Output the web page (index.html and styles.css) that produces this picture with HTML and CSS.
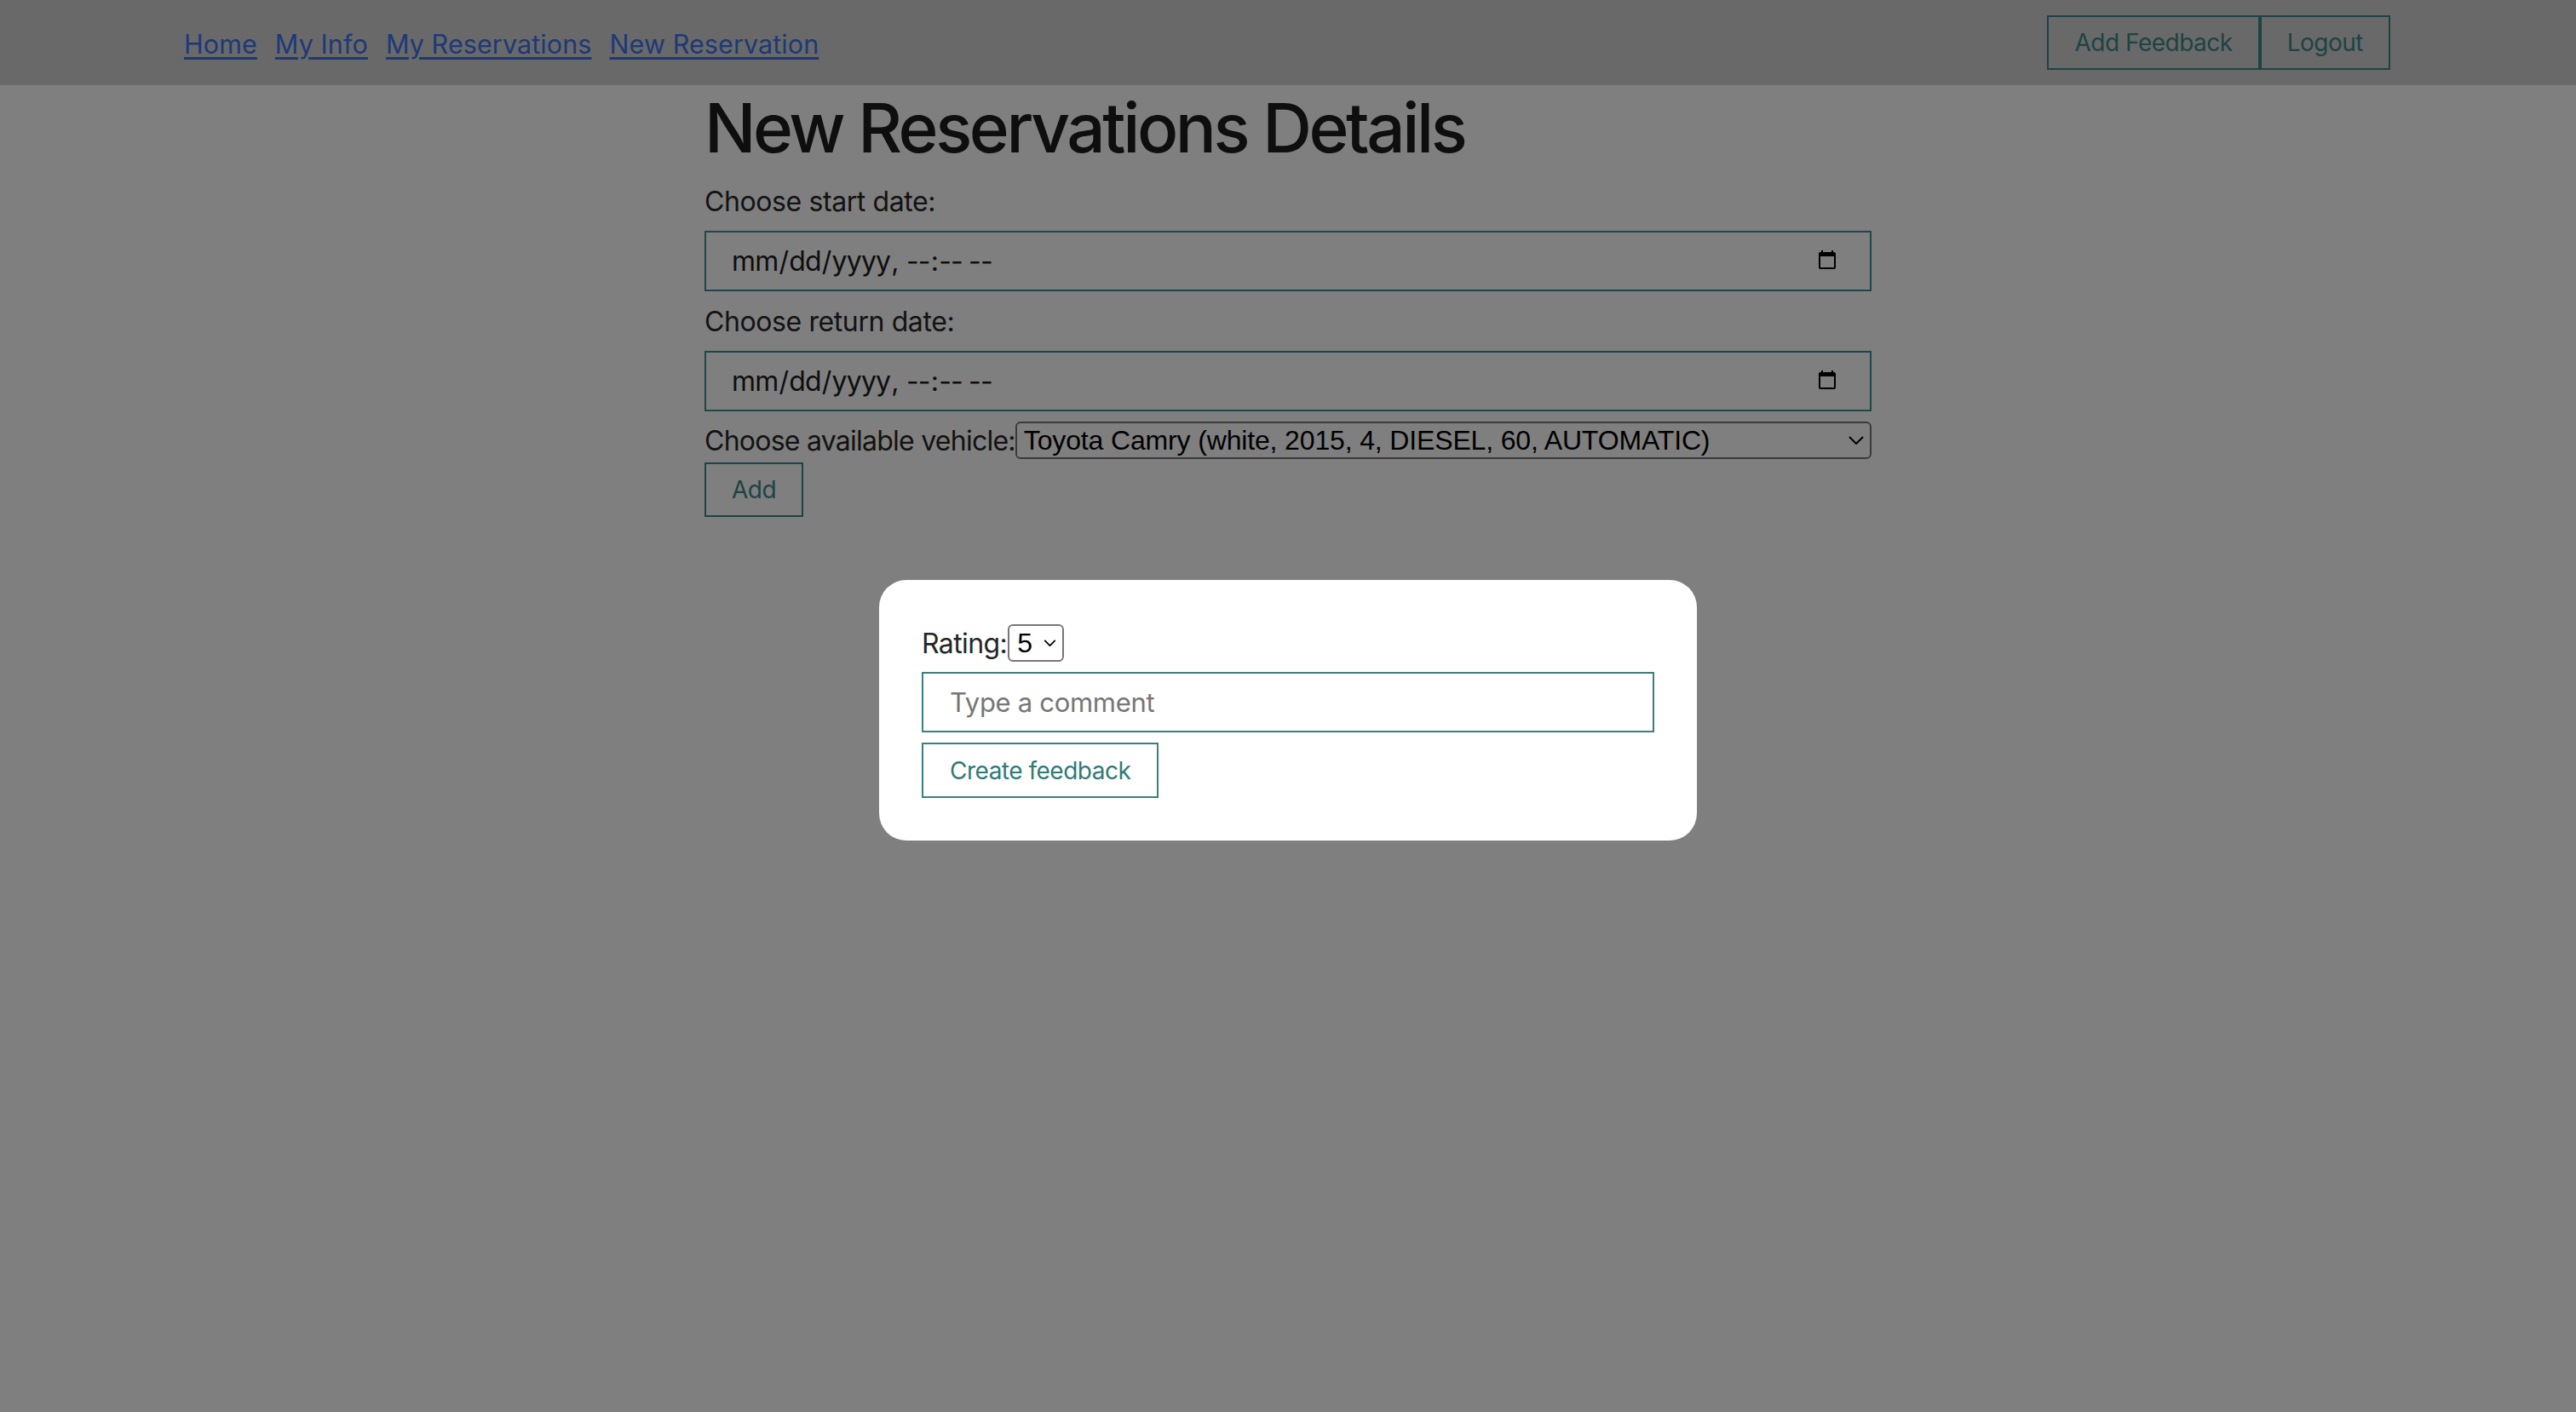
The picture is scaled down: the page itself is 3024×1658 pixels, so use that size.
FILE: index.html
```html
<!DOCTYPE html>
<html lang="en">
<head>
<meta charset="utf-8">
<title>New Reservation</title>
<link rel="stylesheet" href="styles.css">
</head>
<body>
<header class="topbar">
  <nav class="nav">
    <a class="nav-link" href="#">Home</a>
    <a class="nav-link" href="#">My Info</a>
    <a class="nav-link" href="#">My Reservations</a>
    <a class="nav-link" href="#">New Reservation</a>
  </nav>
  <div class="actions">
    <button class="btn">Add Feedback</button>
    <button class="btn">Logout</button>
  </div>
</header>

<main class="main">
  <h1 class="title">New Reservations Details</h1>
  <form class="res-form">
    <label class="label" for="start">Choose start date:</label>
    <input class="date-input" id="start" type="datetime-local">
    <label class="label label-second" for="return">Choose return date:</label>
    <input class="date-input" id="return" type="datetime-local">
    <div class="vehicle-row">
      <label class="label label-vehicle" for="vehicle">Choose available vehicle:</label>
      <div class="select-wrap select-wide">
        <select class="select" id="vehicle">
          <option>Toyota Camry (white, 2015, 4, DIESEL, 60, AUTOMATIC)</option>
        </select>
        <svg class="chevron" viewBox="0 0 18 10" width="18" height="10"><path d="M1 1l8 8 8-8" fill="none" stroke="#000" stroke-width="2"/></svg>
      </div>
    </div>
    <button class="btn btn-add" type="button">Add</button>
  </form>
</main>

<div class="overlay">
  <div class="modal">
    <div class="rating-row">
      <label class="label rating-label" for="rating">Rating:</label>
      <div class="select-wrap select-small">
        <select class="select" id="rating">
          <option>5</option>
        </select>
        <svg class="chevron chevron-small" viewBox="0 0 16 9" width="15" height="8"><path d="M1 1l7 7 7-7" fill="none" stroke="#000" stroke-width="2"/></svg>
      </div>
    </div>
    <input class="comment-input" type="text" placeholder="Type a comment">
    <button class="btn btn-create" type="button">Create feedback</button>
  </div>
</div>
</body>
</html>
```

FILE: styles.css
```css
* { box-sizing: border-box; }

html, body {
  margin: 0;
  height: 100%;
}

body {
  background: #ffffff;
  font-family: Inter, "Noto Sans", sans-serif;
  color: #222222;
}

.topbar {
  height: 100px;
  background: #d3d3d3;
  display: flex;
  align-items: center;
  justify-content: space-between;
  padding: 0 218px 0 216px;
}

.nav {
  display: flex;
  gap: 21px;
  margin-top: 2px;
}

.nav-link {
  color: #3b72f0;
  font-size: 30.5px;
  letter-spacing: 0.1px;
  text-decoration: underline;
  text-decoration-thickness: 3px;
  text-underline-offset: 4px;
}

.actions {
  display: flex;
}

.btn {
  height: 64px;
  padding: 0 30px;
  border: 2px solid #3a8886;
  background: transparent;
  color: #3a8886;
  font-family: Inter, "Noto Sans", sans-serif;
  font-size: 28px;
  letter-spacing: -0.5px;
  cursor: pointer;
}

.main {
  width: 1370px;
  margin: 0 auto;
}

.title {
  margin: 2px 0 0;
  font-size: 80px;
  line-height: 96px;
  font-weight: 500;
  letter-spacing: -3.4px;
  color: #1c1c1e;
}

.res-form {
  display: flex;
  flex-direction: column;
  align-items: flex-start;
  margin-top: 19px;
}

.label {
  font-size: 32px;
  line-height: 39px;
  letter-spacing: -0.4px;
  color: #262626;
}

.label-vehicle {
  letter-spacing: -0.75px;
}

.date-input {
  width: 100%;
  height: 71px;
  margin: 15px 0 16px;
  border: 2px solid #3e8f8e;
  background: #ffffff;
  padding: 0 37px 0 29px;
  font-family: Inter, "Noto Sans", sans-serif;
  font-size: 32px;
  letter-spacing: -0.8px;
  color: #1c1c1e;
}

.date-input::-webkit-calendar-picker-indicator {
  width: 26px;
  height: 28px;
  padding: 0;
  margin: 0;
}

.label-second {
  margin-top: 0;
}

.vehicle-row {
  display: flex;
  align-items: center;
  width: 100%;
  margin-top: -4px;
}

.select-wrap {
  position: relative;
}

.select-wide {
  flex: 1;
}

.select {
  appearance: none;
  -webkit-appearance: none;
  width: 100%;
  height: 44px;
  border: 2px solid #777777;
  border-radius: 6px;
  background: #ffffff;
  color: #000000;
  font-family: "Liberation Sans", Arial, sans-serif;
  font-size: 32px;
  letter-spacing: -0.15px;
  padding: 0 40px 0 8px;
}

.chevron {
  position: absolute;
  right: 9px;
  top: 17px;
  pointer-events: none;
}

.btn-add {
  margin-top: 4px;
  padding: 0 30px;
}

.overlay {
  position: fixed;
  inset: 0;
  background: rgba(0, 0, 0, 0.5);
  display: flex;
  align-items: center;
  justify-content: center;
  padding-top: 10px;
}

.modal {
  width: 960px;
  background: #ffffff;
  border-radius: 32px;
  padding: 52px 50px 50px;
  display: flex;
  flex-direction: column;
  align-items: flex-start;
  gap: 12px;
}

.rating-row {
  display: flex;
  align-items: center;
}

.rating-label {
  font-size: 32px;
  letter-spacing: -0.6px;
}

.select-small {
  width: 66px;
  margin-left: 1px;
}

.select-small .select {
  font-size: 32px;
  padding: 0 20px 0 9px;
}

.chevron-small {
  right: 9px;
  top: 18px;
}

.comment-input {
  width: 100%;
  height: 71px;
  border: 2px solid #3a7f7d;
  padding: 0 31px;
  font-family: Inter, "Noto Sans", sans-serif;
  font-size: 31px;
  letter-spacing: -0.3px;
  color: #222222;
  background: #ffffff;
}

.comment-input::placeholder {
  color: #767676;
}

.btn-create {
  height: 65px;
  padding: 0 31px;
  border-color: #3a7f7d;
  color: #2f7a77;
}
```
